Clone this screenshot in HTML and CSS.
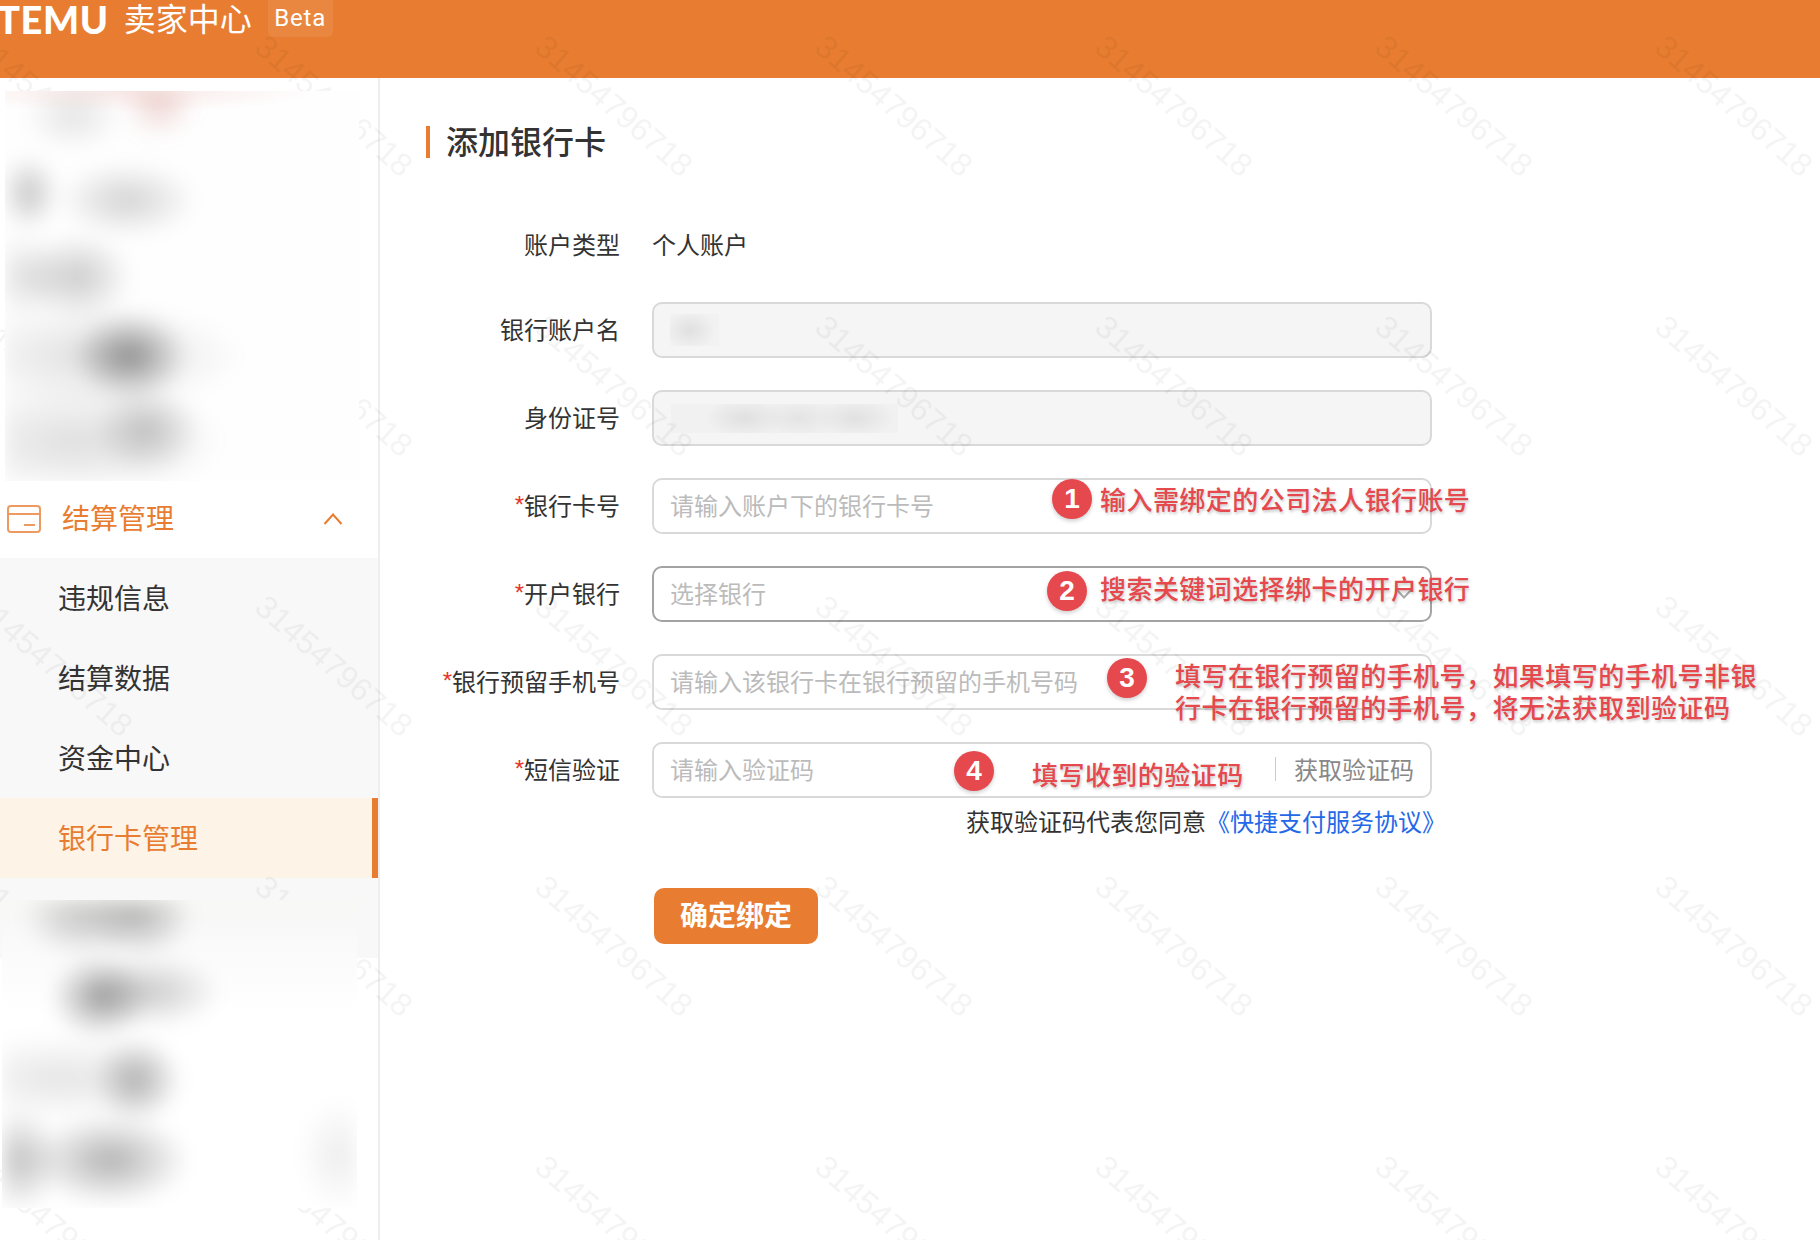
FILE: index.html
```html
<!DOCTYPE html>
<html lang="zh-CN">
<head>
    <meta charset="UTF-8">
    <meta name="viewport" content="width=device-width, initial-scale=1.0">
    <title>添加银行卡</title>
    <link rel="stylesheet" href="styles.css">
</head>
<body>
    <div class="page">
        <header class="top-bar">
            <span class="logo">TEMU</span>
            <span class="brand-name">卖家中心</span>
            <span class="beta-tag">Beta</span>
        </header>

        <div class="layout">
            <aside class="sidebar">
                <div class="blurred blurred-top"></div>

                <div class="menu-title">
                    <svg class="menu-icon" width="34" height="28" viewBox="0 0 34 28" fill="none">
                        <rect x="1" y="1" width="32" height="26" rx="3"/>
                        <path d="M1 9h32M17 20h11"/>
                    </svg>
                    <span class="menu-name">结算管理</span>
                    <svg class="menu-arrow" width="20" height="12" viewBox="0 0 20 12" fill="none">
                        <path d="M1.5 11L10 1.5 18.5 11"/>
                    </svg>
                </div>

                <nav class="submenu">
                    <a class="submenu-item">违规信息</a>
                    <a class="submenu-item">结算数据</a>
                    <a class="submenu-item">资金中心</a>
                    <a class="submenu-item active">银行卡管理</a>
                </nav>

                <div class="menu-rest">
                    <div class="blurred blurred-bottom"></div>
                </div>
            </aside>

            <main class="content">
                <h1 class="page-title">添加银行卡</h1>

                <form class="bank-form">
                    <div class="form-row form-row-type">
                        <label class="form-label">账户类型</label>
                        <div class="form-value">个人账户</div>
                    </div>

                    <div class="form-row">
                        <label class="form-label">银行账户名</label>
                        <div class="field disabled">
                            <div class="masked masked-name"></div>
                        </div>
                    </div>

                    <div class="form-row">
                        <label class="form-label">身份证号</label>
                        <div class="field disabled">
                            <div class="masked masked-id"></div>
                        </div>
                    </div>

                    <div class="form-row">
                        <label class="form-label required">银行卡号</label>
                        <div class="field">
                            <span class="placeholder">请输入账户下的银行卡号</span>
                            <div class="callout callout-1">
                                <span class="callout-num">1</span>
                                <span class="callout-text">输入需绑定的公司法人银行账号</span>
                            </div>
                        </div>
                    </div>

                    <div class="form-row">
                        <label class="form-label required">开户银行</label>
                        <div class="field focused">
                            <span class="placeholder">选择银行</span>
                            <svg class="select-arrow" width="20" height="12" viewBox="0 0 20 12" fill="none">
                                <path d="M1.5 1.5L10 10.5 18.5 1.5"/>
                            </svg>
                            <div class="callout callout-2">
                                <span class="callout-num">2</span>
                                <span class="callout-text">搜索关键词选择绑卡的开户银行</span>
                            </div>
                        </div>
                    </div>

                    <div class="form-row">
                        <label class="form-label required">银行预留手机号</label>
                        <div class="field">
                            <span class="placeholder">请输入该银行卡在银行预留的手机号码</span>
                            <div class="callout callout-3">
                                <span class="callout-num">3</span>
                                <span class="callout-text">填写在银行预留的手机号，如果填写的手机号非银<br>行卡在银行预留的手机号，将无法获取到验证码</span>
                            </div>
                        </div>
                    </div>

                    <div class="form-row form-row-code">
                        <label class="form-label required">短信验证</label>
                        <div class="field-col">
                            <div class="field">
                                <span class="placeholder">请输入验证码</span>
                                <span class="code-btn">获取验证码</span>
                                <div class="callout callout-4">
                                    <span class="callout-num">4</span>
                                    <span class="callout-text">填写收到的验证码</span>
                                </div>
                            </div>
                            <p class="agree-note">获取验证码代表您同意<a class="agree-link">《快捷支付服务协议》</a></p>
                        </div>
                    </div>

                    <button class="submit-btn" type="button">确定绑定</button>
                </form>
            </main>
        </div>

        <!-- repeated account id watermark over the whole page -->
        <svg class="watermark" width="1820" height="1240">
            <defs>
                <pattern id="wm-tile" x="243" y="25" width="280" height="280" patternUnits="userSpaceOnUse">
                    <text x="10" y="25" transform="rotate(41 10 25)">31454796718</text>
                </pattern>
            </defs>
            <rect width="1820" height="1240" fill="url(#wm-tile)"/>
        </svg>
    </div>
</body>
</html>
```

FILE: styles.css
```css
* {
    box-sizing: border-box;
}

body {
    margin: 0;
    background-color: #fff;
    color: #333;
    font-family: "Noto Sans CJK SC", "Liberation Sans", sans-serif;
    font-size: 24px;
}

.page {
    position: relative;
    width: 1820px;
    height: 1240px;
    overflow: hidden;
}

/* top bar */
.top-bar {
    display: flex;
    align-items: flex-start;
    height: 78px;
    background-color: #e87d31;
    color: #fff;
}

.logo {
    margin-left: -3px;
    font-family: Lato, "Liberation Sans", sans-serif;
    font-size: 38px;
    font-weight: 900;
    line-height: 38px;
    letter-spacing: 0.6px;
}

.brand-name {
    margin-left: 15px;
    font-size: 32px;
    line-height: 34px;
}

.beta-tag {
    width: 65px;
    height: 37px;
    margin-left: 16px;
    border-radius: 0 0 6px 6px;
    background-color: rgba(255, 255, 255, 0.08);
    font-family: Roboto, sans-serif;
    font-size: 24px;
    line-height: 36px;
    letter-spacing: 0.8px;
    text-align: center;
}

.layout {
    display: flex;
    height: 1162px;
}

/* sidebar */
.sidebar {
    width: 380px;
    border-right: 2px solid #eee;
}

.blurred {
    position: relative;
    z-index: 2;
    overflow: hidden;
}

.blurred::before {
    content: "";
    position: absolute;
    inset: 0;
    filter: blur(9px);
}

.blurred-top {
    width: 354px;
    height: 390px;
    margin: 13px 0 0 5px;
    background-color: #fefefe;
    background-image: radial-gradient(ellipse 190px 22px at 120px 0, rgba(225, 150, 140, 0.2), transparent);
}

.blurred-top::before {
    background-image:
        radial-gradient(ellipse 38px 36px at 154px 12px, rgba(200, 120, 110, 0.3), transparent),
        radial-gradient(ellipse 50px 34px at 68px 26px, rgba(0, 0, 0, 0.1), transparent),
        radial-gradient(ellipse 30px 38px at 24px 102px, rgba(0, 0, 0, 0.22), transparent),
        radial-gradient(ellipse 70px 38px at 122px 109px, rgba(0, 0, 0, 0.17), transparent),
        radial-gradient(ellipse 42px 44px at 20px 186px, rgba(0, 0, 0, 0.12), transparent),
        radial-gradient(ellipse 54px 44px at 73px 186px, rgba(0, 0, 0, 0.2), transparent),
        radial-gradient(ellipse 58px 44px at 125px 265px, rgba(0, 0, 0, 0.38), transparent),
        radial-gradient(ellipse 150px 52px at 90px 265px, rgba(0, 0, 0, 0.12), transparent),
        radial-gradient(ellipse 54px 44px at 142px 339px, rgba(0, 0, 0, 0.2), transparent),
        radial-gradient(ellipse 150px 60px at 70px 350px, rgba(0, 0, 0, 0.12), transparent);
}

.menu-title {
    display: flex;
    align-items: center;
    height: 77px;
    padding: 0 35px 2px 7px;
    color: #e87d31;
    font-size: 28px;
}

.menu-name {
    margin-bottom: 4px;
}

.menu-icon {
    margin-right: 21px;
    stroke: #ec9a5f;
    stroke-width: 2;
}

.menu-arrow {
    margin-left: auto;
    stroke: #e87d31;
    stroke-width: 2;
}

.submenu {
    display: flex;
    flex-direction: column;
}

.submenu-item {
    height: 80px;
    padding-left: 58px;
    background-color: #f8f8f8;
    font-size: 28px;
    line-height: 78px;
}

.submenu-item.active {
    border-right: 6px solid #e87d31;
    background-color: #fdf3e7;
    color: #e87d31;
}

.menu-rest {
    padding: 22px 0 0 2px;
    background-image: linear-gradient(#f8f8f8 80px, transparent 80px);
}

.blurred-bottom {
    width: 355px;
    height: 308px;
    background-color: #fff;
    background-image: linear-gradient(#f8f8f5, #f8f8f8 20px, #fff 110px);
}

.blurred-bottom::before {
    background-image:
        radial-gradient(ellipse 54px 40px at 137px 17px, rgba(0, 0, 0, 0.26), transparent),
        radial-gradient(ellipse 60px 40px at 80px 17px, rgba(0, 0, 0, 0.2), transparent),
        radial-gradient(ellipse 50px 42px at 98px 97px, rgba(0, 0, 0, 0.36), transparent),
        radial-gradient(ellipse 70px 36px at 150px 92px, rgba(0, 0, 0, 0.2), transparent),
        radial-gradient(ellipse 44px 44px at 134px 180px, rgba(0, 0, 0, 0.28), transparent),
        radial-gradient(ellipse 130px 44px at 60px 178px, rgba(0, 0, 0, 0.1), transparent),
        radial-gradient(ellipse 80px 46px at 108px 260px, rgba(0, 0, 0, 0.3), transparent),
        radial-gradient(ellipse 40px 52px at 18px 260px, rgba(0, 0, 0, 0.24), transparent),
        radial-gradient(ellipse 40px 56px at 337px 255px, rgba(0, 0, 0, 0.07), transparent);
}

/* form */
.content {
    flex: 1;
    padding: 48px 0 0 46px;
}

.page-title {
    height: 32px;
    margin: 0;
    padding-left: 16px;
    border-left: 4px solid #e87d31;
    font-size: 32px;
    font-weight: 500;
    line-height: 28px;
}

.bank-form {
    display: flex;
    flex-direction: column;
    gap: 32px;
    margin-top: 60px;
}

.form-row {
    display: flex;
    flex-shrink: 0;
    gap: 32px;
    height: 56px;
}

.form-row-type {
    height: 52px;
}

.form-label {
    display: flex;
    align-items: center;
    justify-content: flex-end;
    width: 194px;
    padding-bottom: 3px;
    line-height: 1;
}

.form-value {
    display: flex;
    align-items: center;
    line-height: 1;
}

.form-row-type .form-label {
    padding-bottom: 0;
}

.form-label.required::before {
    content: "*";
    color: #e8352a;
    font-family: "Liberation Sans", sans-serif;
}

.field-col {
    display: flex;
    flex-direction: column;
}

.field {
    position: relative;
    display: flex;
    flex-shrink: 0;
    align-items: center;
    width: 780px;
    height: 56px;
    padding: 0 16px 3px;
    border: 2px solid #d9d9d9;
    border-radius: 10px;
}

.field.disabled {
    padding-bottom: 0;
    background-color: #f5f5f5;
}

.field.focused {
    border-color: #a3a3a3;
}

.placeholder {
    color: #bbb;
    line-height: 1;
}

.masked-name {
    width: 49px;
    height: 32px;
    background-color: #f2f2f2;
    background-image: radial-gradient(ellipse 26px 20px at 20px 16px, #e0e0e0, transparent);
}

.masked-id {
    width: 227px;
    height: 29px;
    margin-left: 1px;
    background-color: #f1f1f1;
    background-image:
        radial-gradient(ellipse 40px 20px at 74px 14px, #e0e0e0, transparent),
        radial-gradient(ellipse 40px 20px at 128px 14px, #e4e4e4, transparent),
        radial-gradient(ellipse 40px 20px at 184px 14px, #e1e1e1, transparent);
}

.select-arrow {
    margin-left: auto;
    stroke: #aaa;
    stroke-width: 2;
}

.code-btn {
    margin-left: auto;
    padding-left: 18px;
    border-left: 1px solid #ccc;
    color: #888;
    line-height: 24px;
}

.agree-note {
    flex-shrink: 0;
    height: 32px;
    margin: 11px -14px 0 0;
    line-height: 1;
    text-align: right;
}

.agree-link {
    color: #2468e8;
}

.form-row-code {
    margin-bottom: 58px;
}

.submit-btn {
    flex-shrink: 0;
    width: 164px;
    height: 56px;
    margin-left: 228px;
    padding: 0 0 4px;
    border: none;
    border-radius: 10px;
    background-color: #e87d31;
    color: #fff;
    font-family: inherit;
    font-size: 28px;
    font-weight: 700;
    line-height: 1;
}

/* red notes drawn on top of the fields */
.callout {
    position: absolute;
    z-index: 3;
    display: flex;
    align-items: flex-start;
    color: #e5484d;
    white-space: nowrap;
}

.callout-num {
    width: 40px;
    height: 40px;
    border-radius: 50%;
    background-color: #e5484d;
    box-shadow: 0 2px 4px rgba(0, 0, 0, 0.2);
    color: #fff;
    font-family: "Liberation Sans", sans-serif;
    font-size: 28px;
    font-weight: 700;
    line-height: 40px;
    text-align: center;
}

.callout-text {
    font-size: 26px;
    font-weight: 500;
    line-height: 32px;
    letter-spacing: 0.45px;
    text-shadow: 1px 2px 3px rgba(0, 0, 0, 0.22);
}

.callout-1 {
    top: -1px;
    left: 398px;
    gap: 8px;
}

.callout-1 .callout-text {
    margin-top: 4px;
}

.callout-2 {
    top: 3px;
    left: 393px;
    gap: 13px;
}

.callout-2 .callout-text {
    margin-top: 1px;
}

.callout-3 {
    top: 2px;
    left: 453px;
    gap: 28px;
}

.callout-3 .callout-text {
    margin-top: 1px;
}

.callout-4 {
    top: 7px;
    left: 300px;
    gap: 38px;
}

.callout-4 .callout-text {
    margin-top: 7px;
}

.watermark {
    position: absolute;
    top: 0;
    left: 0;
    z-index: 1;
    filter: blur(0.5px);
    pointer-events: none;
}

.watermark text {
    fill: rgba(0, 0, 0, 0.045);
    font-family: "Liberation Sans", sans-serif;
    font-size: 32px;
}
```
